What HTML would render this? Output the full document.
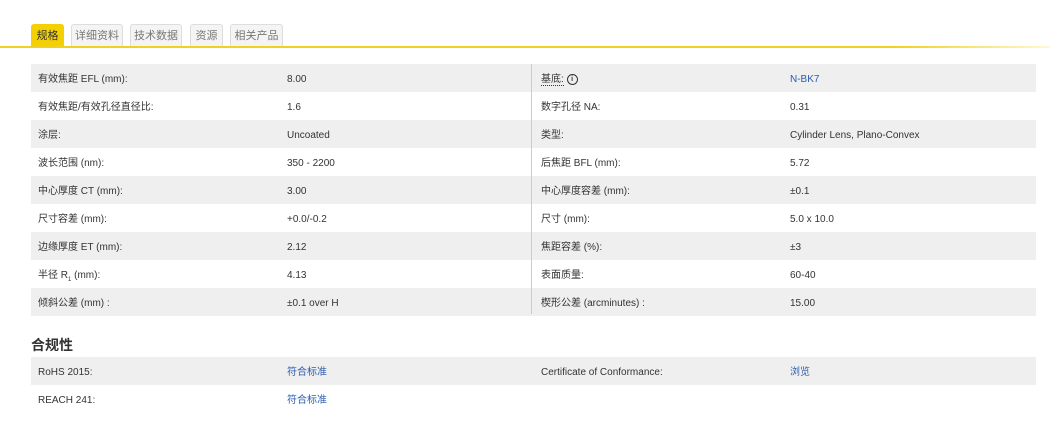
<!DOCTYPE html>
<html><head><meta charset="utf-8"><style>
body{margin:0;width:1050px;height:433px;background:#fff;font-family:"Liberation Sans","Noto Sans CJK SC",sans-serif;color:#333;position:relative;overflow:hidden}
.tab{position:absolute;top:24px;height:22px;line-height:22px;font-size:11px;color:#777;background:#f4f4f4;border:1px solid #ddd;border-bottom:none;border-radius:3px 3px 0 0;text-align:center;box-sizing:border-box}
.tab.a{background:#f5d000;color:#333;border-color:#f5d000}
.line{position:absolute;left:0;top:46px;width:1050px;height:2px;background:linear-gradient(to right,#f0d020 0%,#f0d020 85%,#fff8d0 100%)}
.t{position:absolute;left:31px;width:1005px;font-size:10px}
.r{position:relative;height:28px}
.r.g{background:#efefef}
.r span.c{position:absolute;top:2px;line-height:28px;white-space:nowrap}
.sep{position:absolute;left:531px;top:64px;width:1px;height:250px;background:#ccc}
a{color:#2a5db0;text-decoration:none}
h3{position:absolute;left:31px;top:336px;margin:0;font-size:14px;font-weight:bold;color:#333;line-height:18px}
sub{font-size:6px;line-height:0}
</style></head><body>
<div class="tab a" style="left:31px;width:33px">规格</div>
<div class="tab" style="left:71px;width:52px">详细资料</div>
<div class="tab" style="left:130px;width:52px">技术数据</div>
<div class="tab" style="left:190px;width:33px">资源</div>
<div class="tab" style="left:230px;width:53px">相关产品</div>
<div class="line"></div>
<div class="t" style="top:64px">
<div class="r g"><span class="c" style="left:7px">有效焦距 EFL (mm):</span><span class="c" style="left:256px">8.00</span><span class="c" style="left:510px"><span style="border-bottom:1px dotted #333;line-height:12px">基底:</span> <b style="display:inline-block;width:9px;height:9px;border:1px solid #333;border-radius:50%;font-size:7px;line-height:9px;text-align:center;vertical-align:middle">i</b></span><span class="c" style="left:759px"><a>N-BK7</a></span></div>
<div class="r"><span class="c" style="left:7px">有效焦距/有效孔径直径比:</span><span class="c" style="left:256px">1.6</span><span class="c" style="left:510px">数字孔径 NA:</span><span class="c" style="left:759px">0.31</span></div>
<div class="r g"><span class="c" style="left:7px">涂层:</span><span class="c" style="left:256px">Uncoated</span><span class="c" style="left:510px">类型:</span><span class="c" style="left:759px">Cylinder Lens, Plano-Convex</span></div>
<div class="r"><span class="c" style="left:7px">波长范围 (nm):</span><span class="c" style="left:256px">350 - 2200</span><span class="c" style="left:510px">后焦距 BFL (mm):</span><span class="c" style="left:759px">5.72</span></div>
<div class="r g"><span class="c" style="left:7px">中心厚度 CT (mm):</span><span class="c" style="left:256px">3.00</span><span class="c" style="left:510px">中心厚度容差 (mm):</span><span class="c" style="left:759px">±0.1</span></div>
<div class="r"><span class="c" style="left:7px">尺寸容差 (mm):</span><span class="c" style="left:256px">+0.0/-0.2</span><span class="c" style="left:510px">尺寸 (mm):</span><span class="c" style="left:759px">5.0 x 10.0</span></div>
<div class="r g"><span class="c" style="left:7px">边缘厚度 ET (mm):</span><span class="c" style="left:256px">2.12</span><span class="c" style="left:510px">焦距容差 (%):</span><span class="c" style="left:759px">±3</span></div>
<div class="r"><span class="c" style="left:7px">半径 R<sub>1</sub> (mm):</span><span class="c" style="left:256px">4.13</span><span class="c" style="left:510px">表面质量:</span><span class="c" style="left:759px">60-40</span></div>
<div class="r g"><span class="c" style="left:7px">倾斜公差 (mm) :</span><span class="c" style="left:256px">±0.1 over H</span><span class="c" style="left:510px">楔形公差 (arcminutes) :</span><span class="c" style="left:759px">15.00</span></div>
</div>
<div class="sep"></div>
<h3>合规性</h3>
<div class="t" style="top:357px">
<div class="r g"><span class="c" style="left:7px">RoHS 2015:</span><span class="c" style="left:256px"><a>符合标准</a></span><span class="c" style="left:510px">Certificate of Conformance:</span><span class="c" style="left:759px"><a>浏览</a></span></div>
<div class="r"><span class="c" style="left:7px">REACH 241:</span><span class="c" style="left:256px"><a>符合标准</a></span></div>
</div>
</body></html>
